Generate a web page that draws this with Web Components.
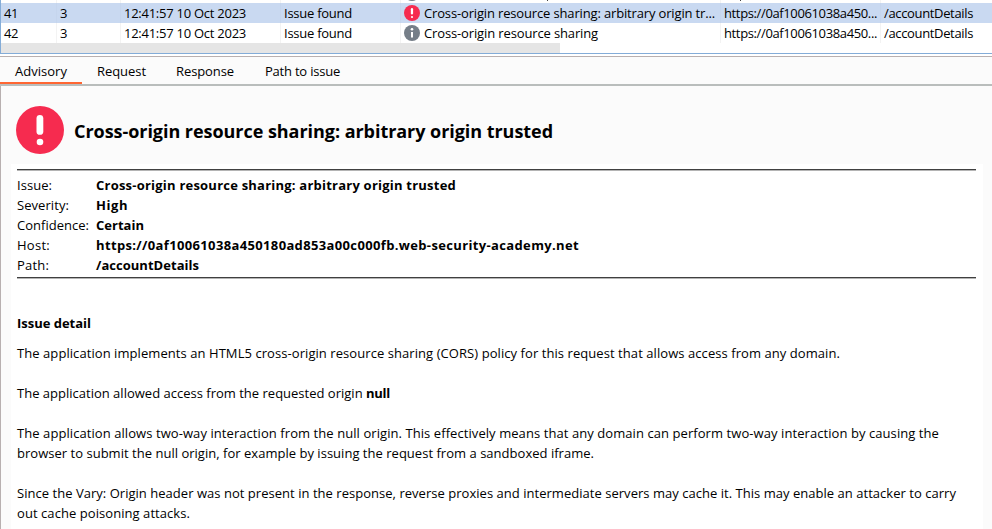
<!DOCTYPE html>
<html lang="en">
<head>
<meta charset="utf-8">
<title>Issue advisory</title>
<style>
html,body{margin:0;height:100%;overflow:hidden;background:#fbfbfb}
body{font:13px/20px "Open Sans","Noto Sans",sans-serif;color:#000}
</style>
</head>
<body>
<issue-app></issue-app>
<script>
const define = (name, html, setup) => customElements.define(name, class extends HTMLElement {
  connectedCallback() {
    if (this.shadowRoot) return;
    const t = document.createElement('template');
    t.innerHTML = html;
    this.attachShadow({ mode: 'open' }).append(t.content.cloneNode(true));
    if (setup) setup(this, this.shadowRoot);
  }
});

define('severity-icon', `<style>:host{display:block;flex:none;width:16px;height:16px}:host([large]){width:48px;height:48px}svg{display:block;width:100%;height:100%}.i{display:none}:host([kind=info]) .i{display:block}:host([kind=info]) .h{display:none}</style>
<svg class="h" viewBox="0 0 48 48"><circle cx="24" cy="24" r="24" fill="#f62b4f"/><rect x="20.5" y="9" width="6.8" height="19.8" rx="3.4" fill="#fff"/><circle cx="24" cy="36" r="3.3" fill="#fff"/></svg>
<svg class="i" viewBox="0 0 16 16"><circle cx="8" cy="8" r="8" fill="#757e88"/><circle cx="8" cy="4.3" r="1.3" fill="#fff"/><path d="M7 7h2v5.5H7z" fill="#fff"/></svg>`);

define('issue-row', `<style>
:host{display:grid;grid-template-columns:56px 64px 160px 120px 320px 160px 1fr;height:20px;background:#fff;flex:none}
:host([selected]){background:#c9d9f1}
div{border-right:1px solid #f3f3f3;padding-left:3px;display:flex;white-space:nowrap;min-width:0;box-sizing:border-box}
:host([selected]) div{border-color:#c5d5ed}
div:last-child{border:0}
.icon{align-items:center;gap:4px}
</style>
<div><slot name="id"></slot></div><div><slot name="task"></slot></div><div><slot name="time"></slot></div><div><slot name="action"></slot></div><div class="icon"><slot name="icon"></slot><slot name="type"></slot></div><div><slot name="host"></slot></div><div><slot name="path"></slot></div>`);

define('issue-table', `<style>
:host{display:flex;flex-direction:column;flex:none;height:54px;box-sizing:border-box;border-left:1px solid #83acd8;border-bottom:1px solid #83acd8;background:#fff;overflow:hidden}
.rows{height:43px;display:flex;flex-direction:column;justify-content:flex-end;overflow:hidden}
.bar{width:559px;height:10px;background:#e5e5e5}
</style><div class="rows"><slot></slot></div><div class="bar"></div>`);

define('tab-item', `<style>:host{display:block;box-sizing:border-box;height:27px;padding:4px 15px 0;border-bottom:2px solid transparent}:host([active]){border-color:#ff6633}</style><slot></slot>`);

define('tab-bar', `<style>:host{display:flex;flex:none;box-sizing:border-box;height:32px;border-bottom:2px solid #b9bdbc;background:#fbfbfb;box-shadow:inset 0 2px #fff,inset 0 3px #b8b0b0;padding-top:3px}</style><slot></slot>`);

define('detail-row', `<style>:host{display:flex;height:20px}.k{width:79px}.v{font-weight:700}</style><span class="k"><slot name="key"></slot></span><span class="v"><slot></slot></span>`);

define('rule-line', `<style>:host{display:block;height:2px;background:linear-gradient(#404040 50%,#b4b4b4 50%)}</style>`);

define('advisory-view', `<style>
:host{display:block;flex:none;height:443px;box-sizing:border-box;border-left:1px solid #b8b0b0;padding:0 9px 0 10px;background:#fbfbfb;overflow:hidden}
header{display:flex;height:78px;box-sizing:border-box;padding:20px 0 0 5px;gap:10px;font:700 18px/50px "Open Sans","Noto Sans",sans-serif}
main{background:#fff;height:365px;box-sizing:border-box;padding:5px 7px 0 6px}
</style><header><slot name="header"></slot></header><main><slot></slot></main>`);

define('issue-app', `<style>
:host{display:flex;flex-direction:column;width:992px;height:529px;overflow:hidden}
.rows{display:block;padding:4px 0 2px}
.text{display:flex;flex-direction:column;margin-top:34px}
.text>*{flex:none}
.tail{align-self:flex-end;width:1px;height:4px;margin-bottom:2px;background:#444}
h2{font-size:13px;line-height:20px;margin:0 0 10px}
p{margin:0 0 20px;white-space:nowrap}
fit-text.b{font-weight:700}
</style>
<issue-table>
<issue-row><severity-icon slot="icon" kind="info"></severity-icon><span slot="type" class="tail" style="margin-left:123px"></span><span slot="host" class="tail" style="margin-left:16px"></span></issue-row>
<issue-row selected><fit-text slot="id" w="14">41</fit-text><fit-text slot="task" w="7">3</fit-text><fit-text slot="time" w="122">12:41:57 10 Oct 2023</fit-text><fit-text slot="action" w="68">Issue found</fit-text><severity-icon slot="icon"></severity-icon><fit-text slot="type" w="291">Cross-origin resource sharing: arbitrary origin tr...</fit-text><fit-text slot="host" w="153">https://0af10061038a450...</fit-text><fit-text slot="path" w="89">/accountDetails</fit-text></issue-row>
<issue-row><fit-text slot="id" w="14">42</fit-text><fit-text slot="task" w="7">3</fit-text><fit-text slot="time" w="122">12:41:57 10 Oct 2023</fit-text><fit-text slot="action" w="68">Issue found</fit-text><severity-icon slot="icon" kind="info"></severity-icon><fit-text slot="type" w="174">Cross-origin resource sharing</fit-text><fit-text slot="host" w="153">https://0af10061038a450...</fit-text><fit-text slot="path" w="89">/accountDetails</fit-text></issue-row>
</issue-table>
<tab-bar><tab-item active><fit-text w="52">Advisory</fit-text></tab-item><tab-item><fit-text w="49">Request</fit-text></tab-item><tab-item><fit-text w="58">Response</fit-text></tab-item><tab-item style="padding-left:16px"><fit-text w="75">Path to issue</fit-text></tab-item></tab-bar>
<advisory-view>
<severity-icon slot="header" large></severity-icon><fit-text slot="header" w="479">Cross-origin resource sharing: arbitrary origin trusted</fit-text>
<rule-line></rule-line>
<div class="rows">
<detail-row><fit-text slot="key" w="35">Issue:</fit-text><fit-text w="360">Cross-origin resource sharing: arbitrary origin trusted</fit-text></detail-row>
<detail-row><fit-text slot="key" w="52">Severity:</fit-text><fit-text w="32">High</fit-text></detail-row>
<detail-row><fit-text slot="key" w="72">Confidence:</fit-text><fit-text w="48">Certain</fit-text></detail-row>
<detail-row><fit-text slot="key" w="33">Host:</fit-text><fit-text w="483">https://0af10061038a450180ad853a00c000fb.web-security-academy.net</fit-text></detail-row>
<detail-row><fit-text slot="key" w="32">Path:</fit-text><fit-text w="103">/accountDetails</fit-text></detail-row>
</div>
<rule-line></rule-line>
<div class="text">
<h2><fit-text w="74">Issue detail</fit-text></h2>
<p><fit-text w="823">The application implements an HTML5 cross-origin resource sharing (CORS) policy for this request that allows access from any domain.</fit-text></p>
<p><fit-text w="349">The application allowed access from the requested origin </fit-text><fit-text class="b" w="24">null</fit-text></p>
<p><fit-text w="922">The application allows two-way interaction from the null origin. This effectively means that any domain can perform two-way interaction by causing the</fit-text><br><fit-text w="577">browser to submit the null origin, for example by issuing the request from a sandboxed iframe.</fit-text></p>
<p><fit-text w="939">Since the Vary: Origin header was not present in the response, reverse proxies and intermediate servers may cache it. This may enable an attacker to carry</fit-text><br><fit-text w="173">out cache poisoning attacks.</fit-text></p>
</div>
</advisory-view>`);

/* A single line of text tracked to a given width; defined last, once every container is laid out. */
define('fit-text', `<style>:host{display:inline-block;white-space:pre;vertical-align:top}span{display:inline-block;vertical-align:top}</style><span><slot></slot></span>`,
  (el, root) => {
    const span = root.querySelector('span');
    const w = +el.getAttribute('w');
    const natural = span.getBoundingClientRect().width;
    el.style.width = w + 'px';
    span.style.letterSpacing = ((w - natural) / el.textContent.length) + 'px';
  });
</script>
</body>
</html>
